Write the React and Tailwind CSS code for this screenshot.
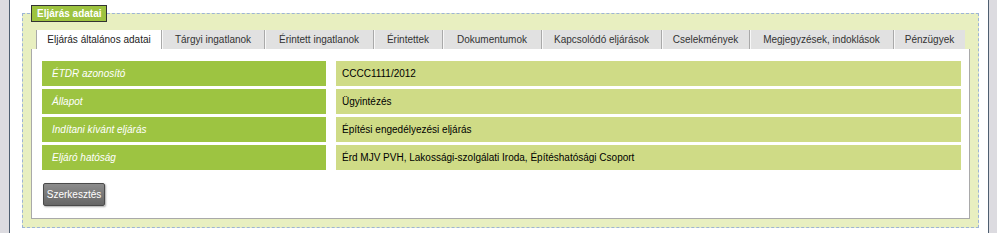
import React from 'react';

const tabs = [
  { label: 'Eljárás általános adatai', w: 'w-[125px]', active: true },
  { label: 'Tárgyi ingatlanok', w: 'w-[103px]' },
  { label: 'Érintett ingatlanok', w: 'w-[109px]' },
  { label: 'Érintettek', w: 'w-[69px]' },
  { label: 'Dokumentumok', w: 'w-[99px]' },
  { label: 'Kapcsolódó eljárások', w: 'w-[120px]' },
  { label: 'Cselekmények', w: 'w-[88px]' },
  { label: 'Megjegyzések, indoklások', w: 'w-[144px]' },
  { label: 'Pénzügyek', w: 'w-[72px]' },
];

const rows = [
  ['ÉTDR azonosító', 'CCCC1111/2012'],
  ['Állapot', 'Ügyintézés'],
  ['Indítani kívánt eljárás', 'Építési engedélyezési eljárás'],
  ['Eljáró hatóság', 'Érd MJV PVH, Lakossági-szolgálati Iroda, Építéshatósági Csoport'],
];

const App = () => {
  return (
    <div className="flex w-[997px] h-[233px] bg-white font-['Liberation_Sans',Arial,sans-serif] text-[10px]">
      <div className="w-[10px] bg-[#dcdbe0] border-r border-[#4e5e70]" />

      <div className="flex-1 pl-[12px] pr-[9px] pt-[5px]">
        <fieldset className="border border-dashed border-[#9db4d6] bg-[#e8efc0] px-[8px] pt-[8px] pb-[8px]">
          <legend className="ml-0 border border-[#333] bg-[#9dc33f] px-[5px] h-[17px] leading-[15px] font-bold text-white">
            Eljárás adatai
          </legend>

          {/* Tabs */}
          <div className="flex ml-[5px] h-[19px]">
            {tabs.map((t) => (
              <div
                key={t.label}
                className={
                  t.active
                    ? `${t.w} bg-white border-l border-[#a9a9a9] text-[#222] flex items-center justify-center`
                    : `${t.w} bg-[#e1e1e1] border-l border-[#a9a9a9] shadow-[inset_1px_0_0_#f7f7f7] text-[#333] flex items-center justify-center`
                }
              >
                {t.label}
              </div>
            ))}
          </div>

          {/* Panel */}
          <div className="bg-white border-l border-r border-b border-[#a9a9a9] pl-[10px] pr-[8px] pt-[12px] pb-[12px]">
            <div className="flex flex-col gap-[3px]">
              {rows.map(([label, value]) => (
                <div key={label} className="flex gap-[10px] h-[25px]">
                  <div className="w-[284px] bg-[#9dc441] text-white italic pl-[10px] flex items-center">
                    {label}
                  </div>
                  <div className="flex-1 bg-[#cfdb86] text-black pl-[6px] flex items-center">
                    {value}
                  </div>
                </div>
              ))}
            </div>
            <button className="mt-[13px] ml-px w-[62px] h-[23px] rounded-[2px] border border-[#4a4a4a] bg-gradient-to-b from-[#8c8c8c] to-[#666] text-white shadow-[1px_1px_2px_rgba(0,0,0,0.35)]">
              Szerkesztés
            </button>
          </div>
        </fieldset>
      </div>

      <div className="w-[9px] bg-[#dcdbe0] border-l border-[#4e5e70]" />
    </div>
  );
};

export default App;
